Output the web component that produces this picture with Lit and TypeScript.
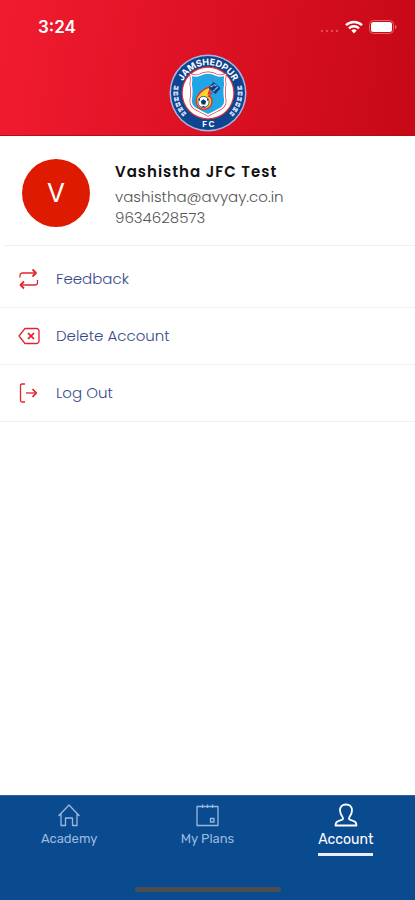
import { LitElement, html, css, svg } from "lit";
import { customElement, property } from "lit/decorators.js";

const shield =
  "M22 21q5 2 9 0q4-2 8-2t8 2q4 2 9 0q-1 5 0 9q-1.500 7 0 17c0 8-9 9-17 14c-8-5-17-6-17-14q1.500-10 0-17q1-4 0-9z";

const crest = svg`
  <svg class="crest" viewBox="0 0 78 78" role="img" aria-label="Jamshedpur FC">
    <defs>
      <path id="arc" d="M11.200 39a27.800 27.800 0 0 1 55.600 0" />
    </defs>
    <circle cx="39" cy="39" r="38.500" fill="#a9b9e6" />
    <circle cx="39" cy="39" r="37" fill="#0d4590" />
    <circle cx="39" cy="39" r="26.500" fill="#e0303c" />
    <circle cx="39" cy="39" r="25.300" fill="#fff" />
    <text class="ring"><textPath href="#arc" startOffset="50%" text-anchor="middle">JAMSHEDPUR</textPath></text>
    <text class="fc" x="35.500" y="73" text-anchor="middle">F</text>
    <text class="fc" x="42.500" y="73" text-anchor="middle">C</text>
    <path d="M7.500 32A32 32 0 0 0 16 61" fill="none" stroke="#c9d6f4" stroke-width="5" stroke-dasharray="4 1.600" />
    <path d="M7.500 32A32 32 0 0 0 16 61" fill="none" stroke="#0d4590" stroke-width="1" stroke-dasharray="2 1.600" />
    <path d="M70.500 32A32 32 0 0 1 62 61" fill="none" stroke="#c9d6f4" stroke-width="5" stroke-dasharray="4 1.600" />
    <path d="M70.500 32A32 32 0 0 1 62 61" fill="none" stroke="#0d4590" stroke-width="1" stroke-dasharray="2 1.600" />
    <path d=${shield} fill="none" stroke="#e0303c" stroke-width="3" />
    <path d=${shield} fill="#20a6e6" stroke="#fff" stroke-width="1.600" />
    <path d="M42 32c-5 2-14 6-15 15a8 8 0 0 0 15.500 3c1-4-.5-7-3-8l3-3l-3 .5z" fill="#ffd52e" stroke="#e5332a" stroke-width="1.400" />
    <circle cx="34.500" cy="48" r="5.600" fill="#fff" stroke="#10366f" stroke-width=".8" />
    <path d="M34.500 45.300l2.700 2l-1 3.100h-3.400l-1-3.100zM29.500 46l1.500-2v3zM39.500 46l-1.500-2v3zM32.500 53h4l-2-1.200z" fill="#10366f" />
    <path d="M44.500 28l7 6l-5 6l-7-6z" fill="#143c85" />
    <path d="M41.500 33l3-1.500M46 35.500l3-2.500M45 30.500l2.500 1.500M44 37l2-1" stroke="#8cc9f2" stroke-width="1.100" />
    <path d="M44 28l-1-4" stroke="#8d7485" stroke-width="1" />
  </svg>`;

const icons = {
  repeat: svg`<svg viewBox="0 0 22 22" class="line">
    <path d="M2 9.500V7.500A2.500 2.500 0 0 1 4.500 5H17M19.500 12v2.500a2.500 2.500 0 0 1-2.500 2.500H4" />
    <path class="thick" d="M14.500 1.500L18 5l-3.500 3.500M6 13.500L2.500 17L6 20.500" /></svg>`,
  erase: svg`<svg viewBox="0 0 22 22" class="line">
    <path d="M7 3.500h11.500a2.500 2.500 0 0 1 2.500 2.500v10a2.500 2.500 0 0 1-2.500 2.500H7L1 11z" />
    <path class="thick" d="M10 8.200l6 5.600M16 8.200l-6 5.600" /></svg>`,
  exit: svg`<svg viewBox="0 0 22 22" class="line">
    <path d="M7 2H4Q2.500 2 2.500 3.500v15Q2.500 20 4 20h3" />
    <path d="M8 11h10" /><path class="thick" d="M14.500 7L18.300 11l-3.800 4" /></svg>`,
  home: svg`<svg viewBox="0 0 24 24" class="line">
    <path d="M1.500 13L12 2l10.500 11M4 11v11.500h4.500V15h7v7.500H20V11" /></svg>`,
  plans: svg`<svg viewBox="0 0 24 24" class="line">
    <path d="M2 3.500h21v19H2zM7.500 1.500v3.500M12.500 1.500v3.500M17.500 1.500v3.500M15.500 15.500h3.500v3.500h-3.500z" /></svg>`,
  person: svg`<svg viewBox="0 0 24 24" class="line">
    <path d="M12 1.500c-4 0-6 2.500-6 6c0 3 1 4.500 2.500 6.500c1 1.500.5 2.500-1 3C4 18 1.500 18.500 1.500 22.500h21c0-4-2.500-4.500-6-5.500c-1.500-.5-2-1.500-1-3C17 12 18 10.500 18 7.500c0-3.500-2-6-6-6z" /></svg>`,
};

type IconName = keyof typeof icons;

@customElement("menu-row")
class MenuRow extends LitElement {
  @property() icon: IconName = "repeat";
  @property() label = "";

  static styles = css`
    :host { display: block; border-bottom: 1px solid #f0f0f0; }
    .row {
      display: flex; align-items: center; gap: 16px;
      width: 100%; height: 56px; padding: 0 18px; border: 0;
      background: none; color: #354a8a; text-align: left; cursor: pointer;
      font: 300 15px/24px Poppins, Inter, sans-serif;
    }
    svg { width: 22px; height: 22px; flex: none; }
    .line { fill: none; stroke: #df2630; stroke-width: 1.3; stroke-linejoin: round; }
    .thick { stroke-width: 1.8; }
  `;

  render() {
    return html`<button class="row" type="button">${icons[this.icon]}<span>${this.label}</span></button>`;
  }
}

@customElement("tab-link")
class TabLink extends LitElement {
  @property() icon: IconName = "home";
  @property() label = "";
  @property({ type: Boolean, reflect: true }) active = false;

  static styles = css`
    :host { flex: 1; display: flex; justify-content: center; color: #9ab8de; }
    :host([active]) { color: #ffffff; }
    .tab {
      display: flex; flex-direction: column; align-items: center;
      color: inherit; text-decoration: none;
      font: 400 13px/20px Rubik, Inter, sans-serif;
    }
    :host([active]) .tab { line-height: 22px; font-size: 14px; }
    :host([active]) .tab::after {
      content: ""; width: 100%; height: 3px; margin-top: 2px; background: #e9edff;
    }
    svg { width: 24px; height: 24px; margin-bottom: 2px; }
    .line { fill: none; stroke: currentColor; stroke-width: 1.3; stroke-linejoin: round; }
    :host([active]) .line { stroke-width: 1.8; }
  `;

  render() {
    return html`<a class="tab" href="#" aria-current=${this.active ? "page" : "false"}>
      ${icons[this.icon]}<span>${this.label}</span></a>`;
  }
}

@customElement("app-root")
class AppRoot extends LitElement {
  static styles = css`
    :host {
      display: flex; flex-direction: column; min-height: 100vh;
      background: #ffffff; font-family: Poppins, Inter, sans-serif;
    }
    .header {
      display: flex; flex-direction: column; align-items: center;
      padding-bottom: 3px; border-bottom: 1px solid #b50d17;
      background: linear-gradient(100deg, #f21b30, #c60817);
    }
    .status {
      display: flex; align-items: center; justify-content: space-between;
      box-sizing: border-box; width: 100%; height: 54px; padding: 0 18px 0 38px;
      color: #ffffff; font: 600 17px/24px Inter, sans-serif;
    }
    .signals { display: flex; align-items: center; gap: 6px; }
    .dots { width: 20px; height: 16px; fill: #e64a54; }
    .wifi { width: 18px; height: 14px; fill: none; stroke: #fff; stroke-width: 2.4; }
    .battery { width: 28px; height: 14px; }
    .crest { width: 78px; height: 78px; }
    .ring, .fc { fill: #ffffff; font: 700 9px Inter, sans-serif; }
    .fc { font-size: 8px; }
    .profile {
      display: flex; align-items: center; gap: 25px;
      padding: 22px 22px 17px;
    }
    .rule { height: 1px; margin: 0 0 5px 4px; border: 0; background: #f0f0f0; }
    .avatar {
      display: grid; place-items: center; flex: none;
      width: 68px; height: 68px; border-radius: 50%;
      background: #de1a00; color: #ffffff; font: 400 26px/32px Inter, sans-serif;
    }
    .details {
      display: flex; flex-direction: column; padding-top: 3px;
      color: #555555; font-weight: 300; font-size: 15px; line-height: 21px;
    }
    .name { margin: 0 0 4px; color: #111111; font-size: 15px; line-height: 21px; font-weight: 600; letter-spacing: 1px; }
    .details p { margin: 0; }
    main { flex: 1; }
    .bottom { background: #0a4b90; border-top: 1px solid #345f9e; }
    .tabs { display: flex; height: 84px; padding-top: 7px; box-sizing: border-box; }
    .handle { width: 146px; height: 5px; margin: 7px auto 8px; border-radius: 3px; background: #4b4d4e; }
  `;

  render() {
    return html`
      <header class="header">
        <div class="status">
          <span>3:24</span>
          <div class="signals">
            <svg class="dots" viewBox="0 0 20 16" aria-hidden="true">
              <circle cx="3" cy="12" r="1.200" /><circle cx="8" cy="12" r="1.200" />
              <circle cx="13" cy="12" r="1.200" /><circle cx="18" cy="12" r="1.200" />
            </svg>
            <svg class="wifi" viewBox="0 0 18 14" aria-hidden="true">
              <path d="M1 5.200a11.500 11.500 0 0 1 16 0M4 8.300a7.200 7.200 0 0 1 10 0" />
              <path d="M9 13.500L6.300 10.600a4 4 0 0 1 5.400 0z" fill="#fff" stroke="none" />
            </svg>
            <svg class="battery" viewBox="0 0 28 14" aria-hidden="true">
              <rect x=".5" y=".5" width="24" height="13" rx="4" fill="none" stroke="#e4616a" />
              <rect x="2" y="2" width="21" height="10" rx="2.500" fill="#fff" />
              <path d="M26 5v4q1.500-.5 1.500-2T26 5z" fill="#ee7b80" />
            </svg>
          </div>
        </div>
        ${crest}
      </header>
      <main>
        <section class="profile">
          <div class="avatar" aria-hidden="true">V</div>
          <div class="details">
            <h1 class="name">Vashistha JFC Test</h1>
            <p>vashistha@avyay.co.in</p>
            <p>9634628573</p>
          </div>
        </section>
        <hr class="rule" />
        <menu-row icon="repeat" label="Feedback"></menu-row>
        <menu-row icon="erase" label="Delete Account"></menu-row>
        <menu-row icon="exit" label="Log Out"></menu-row>
      </main>
      <footer class="bottom">
        <nav class="tabs">
          <tab-link icon="home" label="Academy"></tab-link>
          <tab-link icon="plans" label="My Plans"></tab-link>
          <tab-link icon="person" label="Account" active></tab-link>
        </nav>
        <div class="handle"></div>
      </footer>
    `;
  }
}
